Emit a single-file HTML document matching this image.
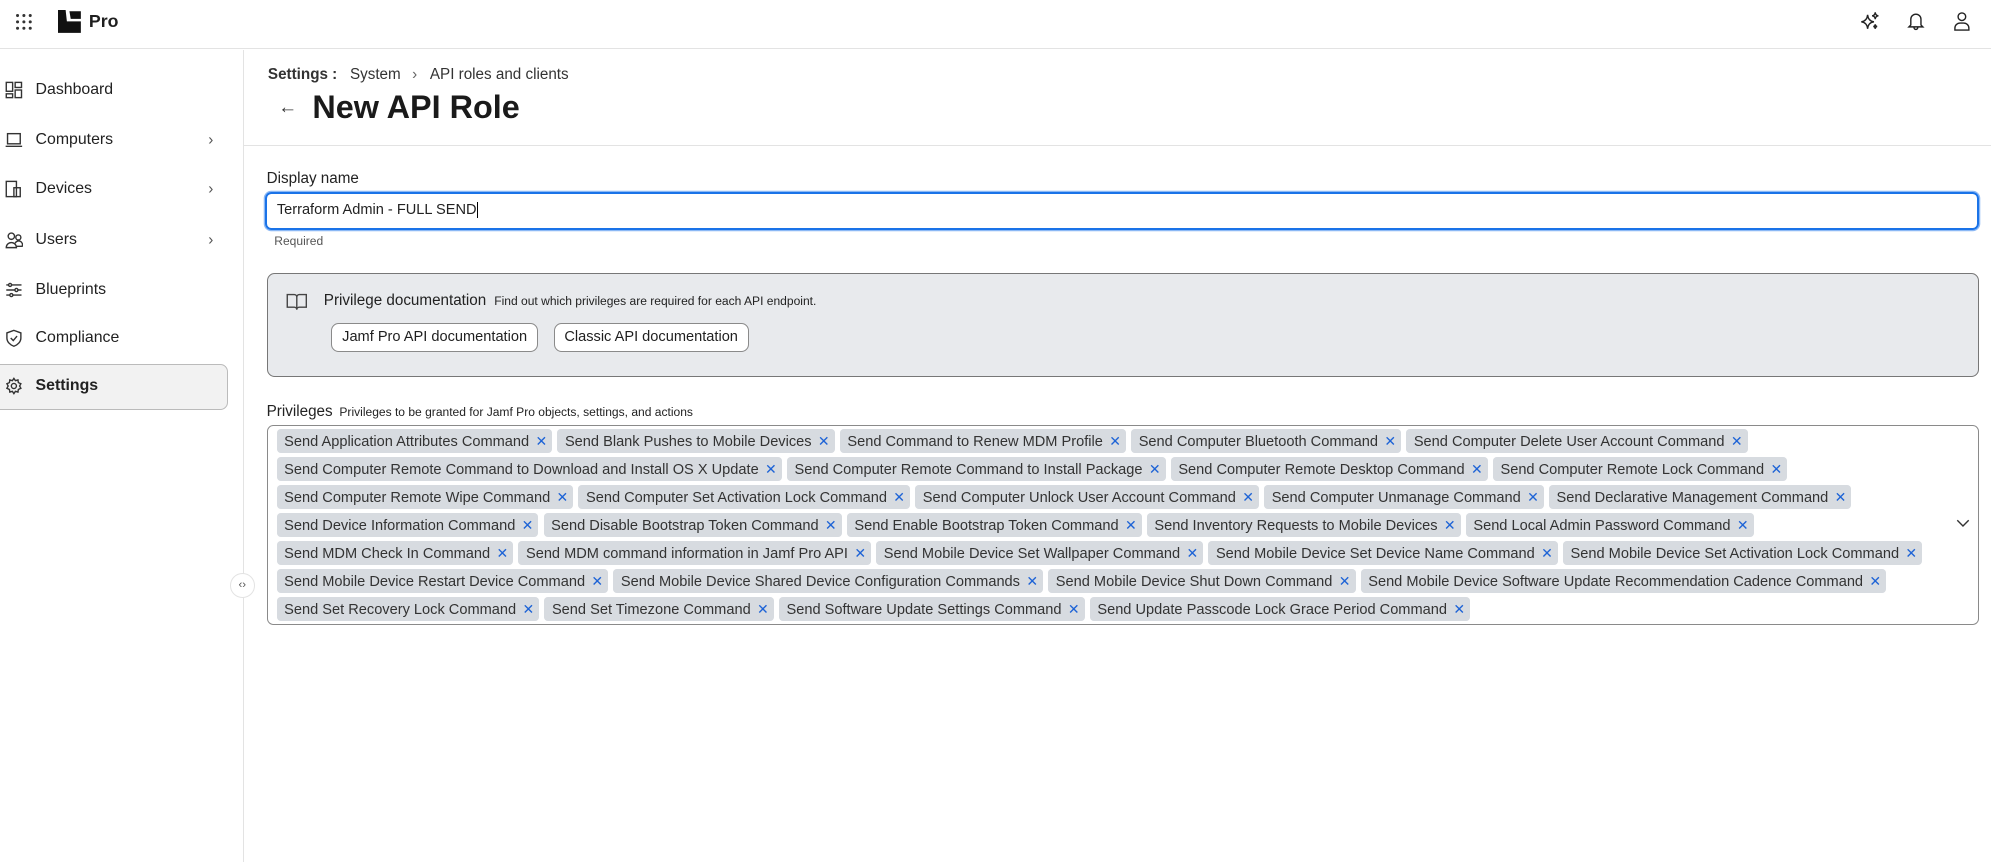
<!DOCTYPE html>
<html><head><meta charset="utf-8"><style>
html,body{margin:0;padding:0;background:#fff;}
body{width:1991px;height:861px;overflow:hidden;font-family:"Liberation Sans",sans-serif;color:#1f1f1f;}
#p{zoom:1.2698;width:1568px;height:678px;position:relative;}
.a{position:absolute;}
.hdr{left:0;top:0;width:1568px;height:38px;border-bottom:1px solid #e3e3e3;}
.sb{left:0;top:39px;width:191px;height:640px;border-right:1px solid #e3e3e3;}
.nav{position:absolute;left:28px;font-size:12.5px;color:#222;transform:translateY(-50%);}
.ic{position:absolute;left:4px;transform:translateY(-50%);}
.chev{position:absolute;left:164px;transform:translateY(-50%);}
.tags{left:210px;top:335px;width:1347px;height:156px;border:1px solid #8a8a8a;border-radius:5px;}
.row{position:absolute;left:7px;display:flex;gap:4px;white-space:nowrap;}
.t{background:#d7dbe0;border-radius:3px;height:19px;line-height:19px;font-size:11.5px;color:#333;padding:0 4px 0 6px;}
.t b{font-weight:normal;color:#1d63d6;margin-left:5px;font-size:11px;}
.btn{position:absolute;top:254px;height:22px;border:1px solid #8a8a8a;border-radius:6px;background:#fff;font-size:11.5px;line-height:22px;text-align:center;}
</style></head><body><div id="p">
<div class="a hdr"></div>
<svg class="a" style="left:12px;top:10px" width="14" height="14"><g fill="#333"><circle cx="2" cy="2" r="1.2"/><circle cx="7" cy="2" r="1.2"/><circle cx="12" cy="2" r="1.2"/><circle cx="2" cy="7" r="1.2"/><circle cx="7" cy="7" r="1.2"/><circle cx="12" cy="7" r="1.2"/><circle cx="2" cy="12" r="1.2"/><circle cx="7" cy="12" r="1.2"/><circle cx="12" cy="12" r="1.2"/></g></svg>
<svg class="a" style="left:46px;top:8px" width="18" height="18"><path d="M0 0h6l1 9h11v9H0z M9 1h9v6h-8z" fill="#111"/></svg>
<div class="a" style="left:70px;top:9px;font-size:14px;font-weight:bold;">Pro</div>
<svg class="a" style="left:1465px;top:9px" width="16" height="16" fill="none" stroke="#222" stroke-width="1.1"><path d="M6 3 Q6.5 8 11 8.5 Q6.5 9 6 14 Q5.5 9 1 8.5 Q5.5 8 6 3z"/><path d="M12 1 Q12.2 3.5 14.5 3.8 Q12.2 4 12 6.5 Q11.8 4 9.5 3.8 Q11.8 3.5 12 1z"/><path d="M12 10.5 Q12.1 12 13.5 12.2 Q12.1 12.4 12 14 Q11.9 12.4 10.5 12.2 Q11.9 12 12 10.5z"/></svg>
<svg class="a" style="left:1502px;top:9px" width="14" height="16" fill="none" stroke="#222" stroke-width="1.1"><path d="M3 11V6.5a4 4 0 0 1 8 0V11l1.5 1.5h-11z M5.5 13a1.5 1.5 0 0 0 3 0"/></svg>
<svg class="a" style="left:1538px;top:9px" width="14" height="16" fill="none" stroke="#222" stroke-width="1.1"><circle cx="7" cy="4.5" r="3"/><path d="M1.5 15v-1.5a4 4 0 0 1 4-4h3a4 4 0 0 1 4 4V15z"/></svg>

<div class="a sb">
<div style="position:absolute;left:0;top:248px;width:179px;height:34px;border:1px solid #bbb;border-left:none;border-radius:0 6px 6px 0;background:#f2f2f2;"></div>
<svg class="ic" style="top:32px" width="14" height="14" fill="none" stroke="#333" stroke-width="1.1"><rect x="1" y="1" width="5" height="7"/><rect x="8" y="1" width="5" height="4"/><rect x="1" y="10" width="5" height="3"/><rect x="8" y="7" width="5" height="6"/></svg><div class="nav" style="top:32px">Dashboard</div>
<svg class="ic" style="top:71px" width="14" height="14" fill="none" stroke="#333" stroke-width="1.1"><rect x="2" y="2" width="10" height="8"/><path d="M0.5 12h13"/></svg><div class="nav" style="top:71px">Computers</div><div class="chev" style="top:71px;font-size:12px;color:#555">&#8250;</div>
<svg class="ic" style="top:110px" width="14" height="14" fill="none" stroke="#333" stroke-width="1.1"><rect x="1" y="1" width="8" height="12"/><rect x="7" y="6" width="5" height="7"/></svg><div class="nav" style="top:110px">Devices</div><div class="chev" style="top:110px;font-size:12px;color:#555">&#8250;</div>
<svg class="ic" style="top:150px" width="14" height="14" fill="none" stroke="#333" stroke-width="1.1"><circle cx="5" cy="4" r="2.5"/><circle cx="10.5" cy="5" r="2"/><path d="M1 13a4 4 0 0 1 8 0z M8 9.5a3 3 0 0 1 5.5 2.5H9"/></svg><div class="nav" style="top:150px">Users</div><div class="chev" style="top:150px;font-size:12px;color:#555">&#8250;</div>
<svg class="ic" style="top:189px" width="14" height="14" fill="none" stroke="#333" stroke-width="1.1"><path d="M1 3h12M1 7h12M1 11h12"/><circle cx="4" cy="3" r="1.2" fill="#fff"/><circle cx="9" cy="7" r="1.2" fill="#fff"/><circle cx="5" cy="11" r="1.2" fill="#fff"/></svg><div class="nav" style="top:189px">Blueprints</div>
<svg class="ic" style="top:227px" width="14" height="14" fill="none" stroke="#333" stroke-width="1.1"><path d="M7 1l5.5 2v4c0 3-2.5 5.5-5.5 6.5C4 12.5 1.5 10 1.5 7V3z M4.5 7l2 2 3-3.5"/></svg><div class="nav" style="top:227px">Compliance</div>
<svg class="ic" style="top:265px" width="14" height="14" fill="none" stroke="#333" stroke-width="1.1"><circle cx="7" cy="7" r="2"/><path d="M7 1l1.2 1.8 2-.6.3 2.1 2 .9-1 1.8 1 1.8-2 .9-.3 2.1-2-.6L7 13l-1.2-1.8-2 .6-.3-2.1-2-.9 1-1.8-1-1.8 2-.9.3-2.1 2 .6z"/></svg><div class="nav" style="top:265px;font-weight:bold">Settings</div>
</div>
<div class="a" style="left:181px;top:451px;width:18px;height:18px;border:1px solid #e3e3e3;border-radius:50%;background:#fff;font-size:9px;line-height:18px;text-align:center;color:#555">&#8249;&#8250;</div>

<div class="a" style="left:211px;top:52px;font-size:12px;color:#333;white-space:nowrap"><b>Settings :</b><span style="margin-left:10px">System</span><span style="margin-left:9px;color:#666">&#8250;</span><span style="margin-left:10px">API roles and clients</span></div>
<div class="a" style="left:219px;top:76px;font-size:15px;color:#333">&#8592;</div>
<div class="a" style="left:246px;top:70px;font-size:25.5px;font-weight:bold;color:#1a1a1a">New API Role</div>
<div class="a" style="left:192px;top:114px;width:1376px;height:1px;background:#e3e3e3"></div>

<div class="a" style="left:210px;top:134px;font-size:12px;color:#222">Display name</div>
<div class="a" style="left:209px;top:151px;width:1346px;height:27px;border:2px solid #1a73e8;border-radius:5px;box-shadow:0 0 0 1px #8bb8f5"></div>
<div class="a" style="left:218px;top:159px;font-size:11.5px;color:#222">Terraform Admin - FULL SEND<span style="border-left:1.5px solid #000;margin-left:0">&#8203;</span></div>
<div class="a" style="left:216px;top:184px;font-size:9.5px;color:#555">Required</div>

<div class="a" style="left:210px;top:215px;width:1347px;height:80px;border:1px solid #777;border-radius:6px;background:#e8eaed"></div>
<svg class="a" style="left:225px;top:230px" width="17" height="15" fill="none" stroke="#444" stroke-width="1.1"><path d="M1 2h5.5a2 2 0 0 1 2 2v10a2 2 0 0 0-2-2H1z M16 2h-5.5a2 2 0 0 0-2 2v10a2 2 0 0 1 2-2H16z"/></svg>
<div class="a" style="left:255px;top:230px;font-size:12px;color:#222;white-space:nowrap">Privilege documentation <span style="font-size:9.5px;margin-left:3px">Find out which privileges are required for each API endpoint.</span></div>
<div class="btn" style="left:261px;width:161px">Jamf Pro API documentation</div>
<div class="btn" style="left:436px;width:152px">Classic API documentation</div>

<div class="a" style="left:210px;top:317px;font-size:12px;color:#222;white-space:nowrap">Privileges <span style="font-size:9.5px;margin-left:2px">Privileges to be granted for Jamf Pro objects, settings, and actions</span></div>
<div class="a tags">
<div class="row" style="top:2px"><span class="t">Send Application Attributes Command<b>✕</b></span><span class="t">Send Blank Pushes to Mobile Devices<b>✕</b></span><span class="t">Send Command to Renew MDM Profile<b>✕</b></span><span class="t">Send Computer Bluetooth Command<b>✕</b></span><span class="t">Send Computer Delete User Account Command<b>✕</b></span></div>
<div class="row" style="top:24px"><span class="t">Send Computer Remote Command to Download and Install OS X Update<b>✕</b></span><span class="t">Send Computer Remote Command to Install Package<b>✕</b></span><span class="t">Send Computer Remote Desktop Command<b>✕</b></span><span class="t">Send Computer Remote Lock Command<b>✕</b></span></div>
<div class="row" style="top:46px"><span class="t">Send Computer Remote Wipe Command<b>✕</b></span><span class="t">Send Computer Set Activation Lock Command<b>✕</b></span><span class="t">Send Computer Unlock User Account Command<b>✕</b></span><span class="t">Send Computer Unmanage Command<b>✕</b></span><span class="t">Send Declarative Management Command<b>✕</b></span></div>
<div class="row" style="top:68px"><span class="t">Send Device Information Command<b>✕</b></span><span class="t">Send Disable Bootstrap Token Command<b>✕</b></span><span class="t">Send Enable Bootstrap Token Command<b>✕</b></span><span class="t">Send Inventory Requests to Mobile Devices<b>✕</b></span><span class="t">Send Local Admin Password Command<b>✕</b></span></div>
<div class="row" style="top:90px"><span class="t">Send MDM Check In Command<b>✕</b></span><span class="t">Send MDM command information in Jamf Pro API<b>✕</b></span><span class="t">Send Mobile Device Set Wallpaper Command<b>✕</b></span><span class="t">Send Mobile Device Set Device Name Command<b>✕</b></span><span class="t">Send Mobile Device Set Activation Lock Command<b>✕</b></span></div>
<div class="row" style="top:112px"><span class="t">Send Mobile Device Restart Device Command<b>✕</b></span><span class="t">Send Mobile Device Shared Device Configuration Commands<b>✕</b></span><span class="t">Send Mobile Device Shut Down Command<b>✕</b></span><span class="t">Send Mobile Device Software Update Recommendation Cadence Command<b>✕</b></span></div>
<div class="row" style="top:134px"><span class="t">Send Set Recovery Lock Command<b>✕</b></span><span class="t">Send Set Timezone Command<b>✕</b></span><span class="t">Send Software Update Settings Command<b>✕</b></span><span class="t">Send Update Passcode Lock Grace Period Command<b>✕</b></span></div>
<svg style="position:absolute;left:1330px;top:73px" width="11" height="7" fill="none" stroke="#333" stroke-width="1.1"><path d="M1 1l4.5 4.5L10 1"/></svg>
</div>
</div></body></html>
